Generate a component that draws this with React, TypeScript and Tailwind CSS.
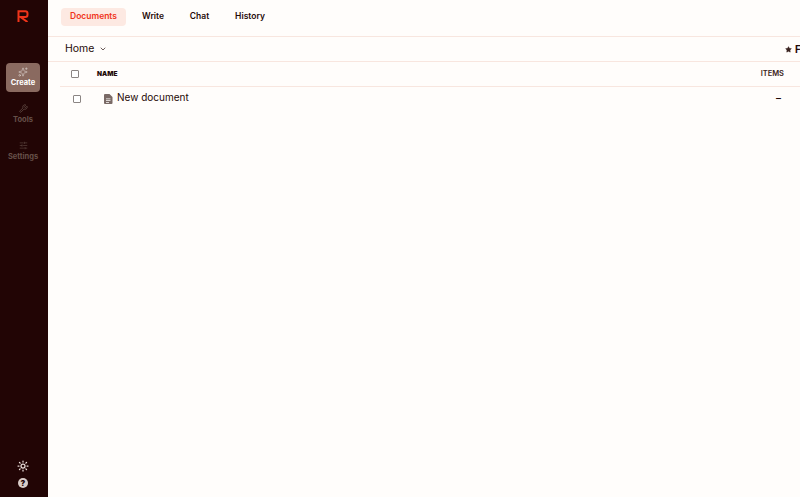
import { Wrench, SlidersHorizontal, Sparkles, Sun, ChevronDown, Star } from "lucide-react";

function SideItem({ label, active, icon }: { label: string; active?: boolean; icon: React.ReactNode }) {
  return (
    <div className={active ? "w-[34px] h-[29px] rounded-[4px] bg-[#8a6a60] flex flex-col items-center justify-center text-white" : "w-[34px] h-[29px] flex flex-col items-center justify-center text-[#665049]"}>
      {icon}
      <span className={active ? "text-[7.5px] leading-[10px] mt-[1px] font-bold" : "text-[7.5px] leading-[10px] mt-[2px] font-bold"}>{label}</span>
    </div>
  );
}

function Box({ className }: { className: string }) {
  return <span className={"block w-[8px] h-[8px] rounded-[1px] border border-[#8b8583] bg-white " + className} />;
}

export default function App() {
  return (
    <div className="w-[800px] h-[497px] flex overflow-hidden bg-[#fffdfb] text-[#1f0a08] font-['Inter',sans-serif]">
      <aside className="w-[48px] shrink-0 bg-[#220505] flex flex-col items-center pr-[2px]">
        <svg className="mt-[10px]" width="12" height="12" viewBox="0 0 12 12" fill="none" stroke="#f0341a" strokeWidth="2">
          <path d="M1.5 12V1.2H8.3A2.2 2.2 0 0 1 10.5 3.4V4.8A2.2 2.2 0 0 1 8.3 7H3.5L10.5 12" />
        </svg>
        <div className="mt-[41px] flex flex-col items-center gap-[8px]">
          <SideItem label="Create" active icon={<Sparkles size={10} strokeWidth={1.5} className="text-[#d8cdc9]" />} />
          <SideItem label="Tools" icon={<Wrench size={9} strokeWidth={2} />} />
          <SideItem label="Settings" icon={<SlidersHorizontal size={9} strokeWidth={1.5} />} />
        </div>
        <div className="mt-auto mb-[9px] flex flex-col items-center gap-[6px]">
          <Sun size={12} strokeWidth={2.5} className="text-[#e8dcd8]" />
          <span className="w-[10px] h-[10px] rounded-full bg-[#d9ccc8] text-[#220505] text-[8px] leading-[10px] font-black text-center">?</span>
        </div>
      </aside>
      <main className="flex-1 min-w-0 flex flex-col">
        <div className="h-[37px] shrink-0 border-b border-[#f8e6df] flex items-start pt-[8px] pl-[13px] text-[8.5px] font-semibold">
          <span className="h-[18px] w-[65px] rounded-[4px] bg-[#fde9e2] text-[#f0341a] leading-[17px] text-center">Documents</span>
          <span className="h-[18px] w-[22px] ml-[16px] leading-[17px] text-center">Write</span>
          <span className="h-[18px] w-[21px] ml-[25px] leading-[17px] text-center">Chat</span>
          <span className="h-[18px] w-[30px] ml-[25px] leading-[17px] text-center">History</span>
        </div>
        <div className="h-[25px] shrink-0 border-b border-[#f8e6df] flex items-center pl-[17px] text-[10.5px]">
          <span>Home</span>
          <ChevronDown size={8} strokeWidth={2} className="ml-[5px]" />
          <Star size={7} fill="#3a2320" strokeWidth={1} className="ml-auto mr-[3px] text-[#3a2320]" />
          <span className="w-[5px] overflow-hidden text-[10px] font-bold">F</span>
        </div>
        <div className="h-[25px] ml-[12px] shrink-0 border-b border-[#f8e6df] flex items-center text-[6.5px] font-black">
          <Box className="ml-[11px]" />
          <span className="ml-[18px] mt-[1px]">NAME</span>
          <span className="ml-auto mr-[16px] text-[7.5px] font-semibold text-[#3a2320]">ITEMS</span>
        </div>
        <div className="h-[23px] ml-[12px] shrink-0 flex items-center">
          <Box className="ml-[13px] mt-[1px]" />
          <svg className="ml-[23px] mt-[1px]" width="9" height="10" viewBox="0 0 9 10">
            <path fillRule="evenodd" fill="#7a6a66" d="M1 0H5.5L8.5 3V9A1 1 0 0 1 7.5 10H1A1 1 0 0 1 0 9V1A1 1 0 0 1 1 0ZM2 4.5V5.3H6.5V4.5ZM2 6.2V7H6.5V6.2ZM2 7.9V8.7H5V7.9Z" />
          </svg>
          <span className="ml-[4px] text-[10px] -mt-[2px]">New document</span>
          <span className="ml-auto mr-[19px] text-[10px] font-semibold">–</span>
        </div>
      </main>
    </div>
  );
}
